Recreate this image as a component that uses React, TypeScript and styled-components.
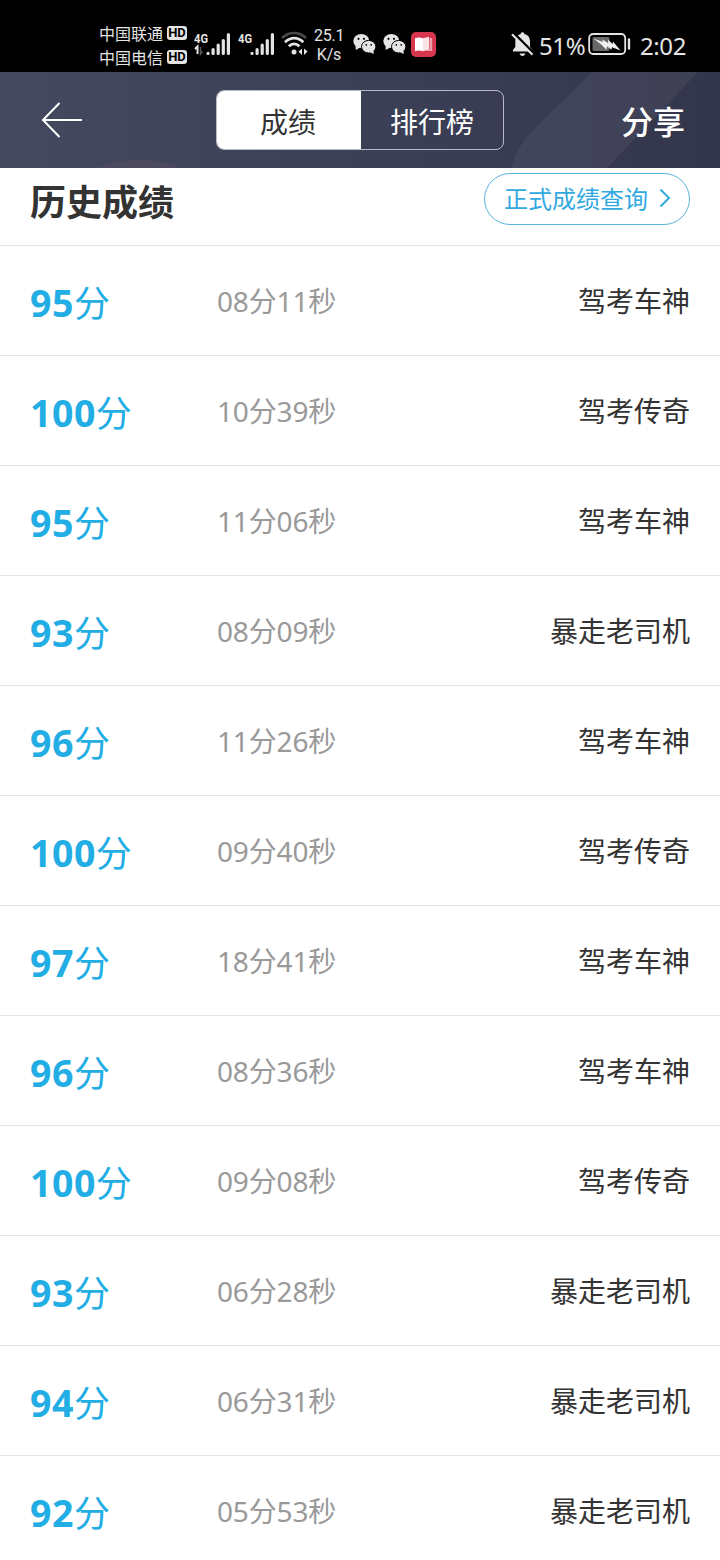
import React from "react";
import styled, { createGlobalStyle } from "styled-components";

const GlobalStyle = createGlobalStyle`
  * { box-sizing: border-box; }
  body {
    margin: 0;
    background: #fff;
    font-family: "Noto Sans CJK SC", sans-serif;
    color: #333;
  }
`;

const Screen = styled.div`
  width: 720px;
  height: 1560px;
  overflow: hidden;
  display: flex;
  flex-direction: column;
  background: #fff;
`;

const StatusBar = styled.div`
  height: 72px;
  flex: none;
  background: #000;
  color: #e4e4e4;
  display: flex;
  align-items: flex-start;
  padding-left: 99px;
`;

const Carriers = styled.div`
  width: 95px;
  padding-top: 21px;
`;

const Carrier = styled.div`
  height: 24px;
  display: flex;
  align-items: center;
  gap: 4px;
  font-size: 16px;
  line-height: 24px;
`;

const HdBadge = styled.span`
  width: 20px;
  height: 14px;
  border-radius: 3px;
  background: #e4e4e4;
  color: #000;
  font: bold 13px/14px "Roboto", sans-serif;
  text-align: center;
`;

const StatusIcon = styled.svg<{ $gap?: number; $top?: number }>`
  flex: none;
  display: block;
  margin-top: ${(p) => p.$top ?? 30}px;
  margin-right: ${(p) => p.$gap ?? 0}px;
`;

const Speed = styled.div`
  width: 30px;
  margin: 26px 9px 0 0;
  font: 16px/19px "Roboto", sans-serif;
  letter-spacing: -0.2px;
  text-align: center;
`;

const StatusText = styled.div<{ $width: number }>`
  width: ${(p) => p.$width}px;
  flex: none;
  margin-top: 30px;
  font: 24px/32px "Noto Sans", sans-serif;
  letter-spacing: -0.4px;
  white-space: nowrap;
`;

const Header = styled.header`
  height: 96px;
  flex: none;
  position: relative;
  display: flex;
  align-items: center;
  padding: 0 35px 0 41px;
  color: #fff;
`;

const Backdrop = styled.svg`
  position: absolute;
  inset: 0;
  z-index: -1;
`;

const Layered = styled.div`
  position: relative;
  z-index: 0;
  flex: none;
`;

const Tabs = styled.div`
  display: flex;
  width: 288px;
  height: 60px;
  margin-left: 133px;
  border: 1px solid #b9bac6;
  border-radius: 8px;
  overflow: hidden;
`;

const Tab = styled.button<{ $active?: boolean }>`
  width: ${(p) => (p.$active ? 144 : 142)}px;
  border: 0;
  padding: ${(p) => (p.$active ? "1px 2px 0 0" : "1px 0 0")};
  font: 28px/40px "Noto Sans CJK SC", sans-serif;
  background: ${(p) => (p.$active ? "#fff" : "transparent")};
  color: ${(p) => (p.$active ? "#333" : "#fff")};
`;

const ShareButton = styled.button`
  border: 0;
  padding: 0;
  margin-left: auto;
  background: none;
  color: #fff;
  font: 500 32px/46px "Noto Sans CJK SC", sans-serif;
`;

const TitleRow = styled.div`
  height: 78px;
  flex: none;
  display: flex;
  align-items: flex-start;
  justify-content: space-between;
  padding: 5px 30px 0;
  border-bottom: 1px solid #e3e5e6;
`;

const Title = styled.h1`
  margin: 1px 0 0;
  font-size: 36px;
  line-height: 52px;
  font-weight: 700;
`;

const QueryButton = styled.button`
  width: 206px;
  height: 52px;
  display: flex;
  align-items: center;
  gap: 11px;
  padding: 0 0 2px 19px;
  border: 1.5px solid #5bb5dd;
  border-radius: 26px;
  background: #fff;
  color: #32a9df;
  font: 24px/36px "Noto Sans CJK SC", sans-serif;
`;

const Row = styled.div`
  height: 110px;
  flex: none;
  display: grid;
  grid-template-columns: 187px 1fr auto;
  align-items: center;
  padding: 0 30px;
  border-bottom: 1px solid #e3e5e6;
`;

const Score = styled.div`
  display: flex;
  align-items: baseline;
  color: #23ade5;
  padding-top: 3px;
`;

const ScoreNumber = styled.span`
  font-family: "Noto Sans", sans-serif;
  font-weight: 700;
  font-size: 37.5px;
  line-height: 52px;
  letter-spacing: 0.5px;
`;

const ScoreUnit = styled.span`
  font-size: 36px;
  line-height: 50px;
`;

const Duration = styled.div`
  font: 28px/42px "Noto Sans", "Noto Sans CJK SC", sans-serif;
  letter-spacing: -0.15px;
  color: #999;
`;

const Rank = styled.div`
  font-size: 28px;
  line-height: 42px;
  padding-bottom: 1px;
`;

const Signal = ({ data = false }: { data?: boolean }) => (
  <StatusIcon width={data ? 44 : 43} height="28" viewBox={data ? "0 0 44 28" : "0 0 43 28"}>
    <text x="0" y="13" fontFamily="Roboto" fontWeight="700" fontSize="13.5" textLength="14" lengthAdjust="spacingAndGlyphs" fill="#e4e4e4">4G</text>
    {data && (
      <>
        <path d="M1 19l2.500-2.500V24" stroke="#e4e4e4" strokeWidth="2" fill="none" />
        <path d="M6.500 17v7l2-2.500" stroke="#555" strokeWidth="1.600" fill="none" />
      </>
    )}
    <g transform="translate(12.5 0)" stroke="#e4e4e4" strokeWidth="3.2" strokeLinecap="round">
      <path d="M1.500 23.300v.1M6.600 19.500v3.900M11.700 15v8.400M16.800 10.500v12.900M21.900 4.500v18.900" />
    </g>
  </StatusIcon>
);

const Wifi = () => (
  <StatusIcon width="28" height="26" viewBox="0 0 28 26" $gap={5} fill="none" strokeWidth="2.5">
    <path d="M1 8C8 1.200 18 1.200 25 8" stroke="#4b4b4b" />
    <path d="M4 12.300C9.500 6.800 17 6.800 22.300 12.300" stroke="#e4e4e4" strokeWidth="2.7" />
    <path d="M7.800 16.200c3.300-3.100 7.400-3.100 10.700 0" stroke="#e4e4e4" strokeWidth="2.8" />
    <circle cx="13" cy="22" r="2.5" fill="#e4e4e4" />
    <path d="M17.500 21.500l3.500-2.700V25zM26.600 21.500L23 18.500V25z" fill="#e4e4e4" />
  </StatusIcon>
);

const Chats = ({ gap }: { gap: number }) => (
  <StatusIcon width="24" height="24" viewBox="0 0 24 24" $gap={gap} $top={32}>
    <ellipse cx="8.300" cy="9" rx="8" ry="7" fill="#e4e4e4" />
    <path d="M2.500 12.500L2.800 18 8 15z" fill="#e4e4e4" />
    <circle cx="5.500" cy="6.800" r="1.1" />
    <circle cx="11" cy="6.800" r="1.1" />
    <ellipse cx="15.700" cy="14.700" rx="7.2" ry="6.3" fill="#e4e4e4" stroke="#000" strokeWidth="1" />
    <path d="M16.500 20l4.300 2-.6-4.500z" fill="#e4e4e4" />
    <circle cx="13.300" cy="12.800" r=".9" />
    <circle cx="18.200" cy="12.800" r=".9" />
  </StatusIcon>
);

const rows: [number, string, string][] = [
  [95, "08分11秒", "驾考车神"],
  [100, "10分39秒", "驾考传奇"],
  [95, "11分06秒", "驾考车神"],
  [93, "08分09秒", "暴走老司机"],
  [96, "11分26秒", "驾考车神"],
  [100, "09分40秒", "驾考传奇"],
  [97, "18分41秒", "驾考车神"],
  [96, "08分36秒", "驾考车神"],
  [100, "09分08秒", "驾考传奇"],
  [93, "06分28秒", "暴走老司机"],
  [94, "06分31秒", "暴走老司机"],
  [92, "05分53秒", "暴走老司机"],
];

export default function App() {
  return (
    <Screen>
      <GlobalStyle />
      <StatusBar>
        <Carriers>
          <Carrier>中国联通<HdBadge>HD</HdBadge></Carrier>
          <Carrier>中国电信<HdBadge>HD</HdBadge></Carrier>
        </Carriers>
        <Signal data />
        <Signal />
        <Wifi />
        <Speed>25.1<br />K/s</Speed>
        <Chats gap={6} />
        <Chats gap={4} />
        <StatusIcon width="25" height="25" viewBox="0 0 25 25" $gap={75} $top={32}>
          <rect width="25" height="25" rx="5" fill="#d6374f" />
          <path d="M4 6.300q4-1.600 8 0v13q-4-1.500-8 0z" fill="#fff" />
          <path d="M12 6.300L18 4.800v13l-6 1.500z" fill="#fbe3e6" />
          <path d="M18.500 6h2.700v13h-8l5.300-1.200z" fill="#eda0ac" />
        </StatusIcon>
        <StatusIcon width="24" height="26" viewBox="0 0 24 26" $gap={4} $top={31}>
          <path d="M2 20.500v-1.800L4.300 16v-5.500C4.300 6.400 6.500 4 9.500 3.300a2 2 0 0 1 4 0C17 4 19 6.500 19 10.500V16l2.300 2.700v1.800z" fill="#e4e4e4" />
          <path d="M8.500 22.500h6q-1 2.500-3 2.500t-3-2.500z" fill="#e4e4e4" />
          <path d="M2.500 2L23 22.500" stroke="#000" strokeWidth="2.6" />
          <path d="M1 3.200L21.500 23.700" stroke="#e4e4e4" strokeWidth="2.2" />
        </StatusIcon>
        <StatusText $width={49}>51%</StatusText>
        <StatusIcon width="43" height="24" viewBox="0 0 43 24" $gap={9} $top={32}>
          <rect x="1.200" y="2" width="36" height="20" rx="4" fill="none" stroke="#e4e4e4" strokeWidth="1.8" />
          <rect x="4.500" y="5" width="17" height="14" rx="1.5" fill="#686868" />
          <path d="M5.500 6.500L15 10l-.8-2.700 6 4-.2-3.500 4.600 4.200.4-2.500L32.500 18.500 24 15.300l-.5 2.500-4.500-3.600-.6 3.600-4.300-4.600z" fill="#f0f0f0" />
          <path d="M41 7.500v9" stroke="#e4e4e4" strokeWidth="2.4" strokeLinecap="round" />
        </StatusIcon>
        <StatusText $width={60}>2:02</StatusText>
      </StatusBar>
      <Layered>
        <Header>
          <Backdrop width="720" height="96" viewBox="0 0 720 96">
            <defs>
              <linearGradient id="night" x1="0" y1="0" x2="1" y2="0">
                <stop offset="0" stopColor="#44495f" />
                <stop offset=".5" stopColor="#3c4057" />
                <stop offset="1" stopColor="#33354b" />
              </linearGradient>
            </defs>
            <rect width="720" height="96" fill="url(#night)" />
            <path d="M592 0h106l-91 96h-96q6-22 25-41z" fill="#fff" opacity=".055" />
            <ellipse cx="138" cy="128" rx="72" ry="40" fill="#7a5870" opacity=".2" />
          </Backdrop>
          <svg width="42" height="38" viewBox="0 0 42 38" fill="none" stroke="#fff" strokeWidth="2">
            <path d="M18.500 2L2 19l16.500 17M2 19h39" />
          </svg>
          <Tabs>
            <Tab $active>成绩</Tab>
            <Tab>排行榜</Tab>
          </Tabs>
          <ShareButton>分享</ShareButton>
        </Header>
      </Layered>
      <TitleRow>
        <Title>历史成绩</Title>
        <QueryButton>
          正式成绩查询
          <svg width="12" height="20" viewBox="0 0 12 20" fill="none" stroke="#32a9df" strokeWidth="2">
            <path d="M1.500 1.500L10 10 1.500 18.500" />
          </svg>
        </QueryButton>
      </TitleRow>
      {rows.map(([score, time, rank], i) => (
        <Row key={i}>
          <Score><ScoreNumber>{score}</ScoreNumber><ScoreUnit>分</ScoreUnit></Score>
          <Duration>{time}</Duration>
          <Rank>{rank}</Rank>
        </Row>
      ))}
    </Screen>
  );
}
